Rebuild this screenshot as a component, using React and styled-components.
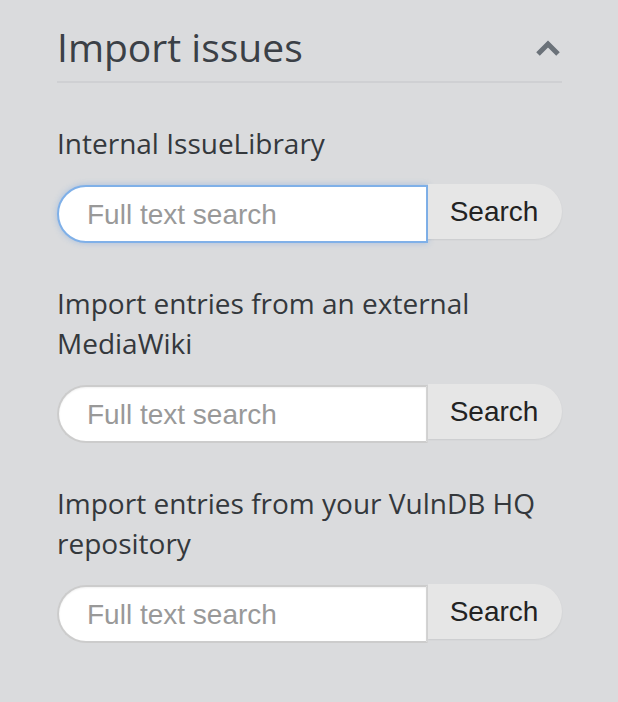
import React from 'react'
import styled, { createGlobalStyle } from 'styled-components'

const Global = createGlobalStyle`
  html, body {
    margin: 0;
    padding: 0;
    background: #dadbdd;
  }
`

const Panel = styled.div`
  width: 618px;
  height: 702px;
  box-sizing: border-box;
  padding: 20px 56px 0 57px;
  font-family: "Open Sans", sans-serif;
  color: #33373b;
`

const Header = styled.div`
  display: flex;
  align-items: flex-start;
  justify-content: space-between;
  height: 61px;
  border-bottom: 2px solid #cfd0d3;
`

const Title = styled.h2`
  margin: 0;
  font-size: 39px;
  line-height: normal;
  font-weight: 400;
  color: #3b4046;
`

const Chevron = styled.svg`
  width: 26px;
  height: 18px;
  margin-right: 1px;
  margin-top: 19px;
`

const Section = styled.div`
  margin-top: 40px;
`

const Label = styled.div`
  font-size: 28px;
  line-height: 40px;
  color: #34383c;
`

const Group = styled.div`
  display: flex;
  align-items: flex-start;
  margin-top: 22px;
  height: 58px;
`

const Input = styled.input`
  width: 371px;
  height: 58px;
  box-sizing: border-box;
  border: 2px solid ${p => (p.$focus ? '#7fb0e8' : '#cccccc')};
  border-right: ${p => (p.$focus ? '2px solid #7fb0e8' : '2px solid #d4d4d4')};
  border-radius: 29px 0 0 29px;
  padding: 2px 0 0 28px;
  font-family: "Liberation Sans", Arial, sans-serif;
  font-size: 28px;
  color: #555;
  background: #fff;
  outline: none;
  box-shadow: ${p => (p.$focus ? '0 0 6px rgba(102,155,225,0.45)' : 'inset 0 1px 2px rgba(0,0,0,0.06)')};
  &::placeholder {
    color: #999;
  }
`

const Button = styled.button`
  flex: 1;
  border: none;
  border-radius: 0 28px 28px 0;
  background: #e6e6e6;
  font-family: "Liberation Sans", Arial, sans-serif;
  font-size: 28px;
  color: #222;
  padding: 0 2px 0 0;
  margin-top: -1px;
  height: 55px;
  box-shadow: 0 1px 2px rgba(0,0,0,0.07);
`

const entries = [
  { label: ['Internal IssueLibrary'], focus: true },
  { label: ['Import entries from an external', 'MediaWiki'] },
  { label: ['Import entries from your VulnDB HQ', 'repository'] },
]

export default function App() {
  return (
    <Panel>
      <Global />
      <Header>
        <Title>Import issues</Title>
        <Chevron viewBox="0 0 26 18">
          <path d="M3 15 L13 5 L23 15" fill="none" stroke="#6b7279" strokeWidth="5" />
        </Chevron>
      </Header>
      {entries.map((e, i) => (
        <Section key={i}>
          <Label>
            {e.label.map((l, j) => (
              <div key={j}>{l}</div>
            ))}
          </Label>
          <Group>
            <Input $focus={e.focus} placeholder="Full text search" />
            <Button>Search</Button>
          </Group>
        </Section>
      ))}
    </Panel>
  )
}
